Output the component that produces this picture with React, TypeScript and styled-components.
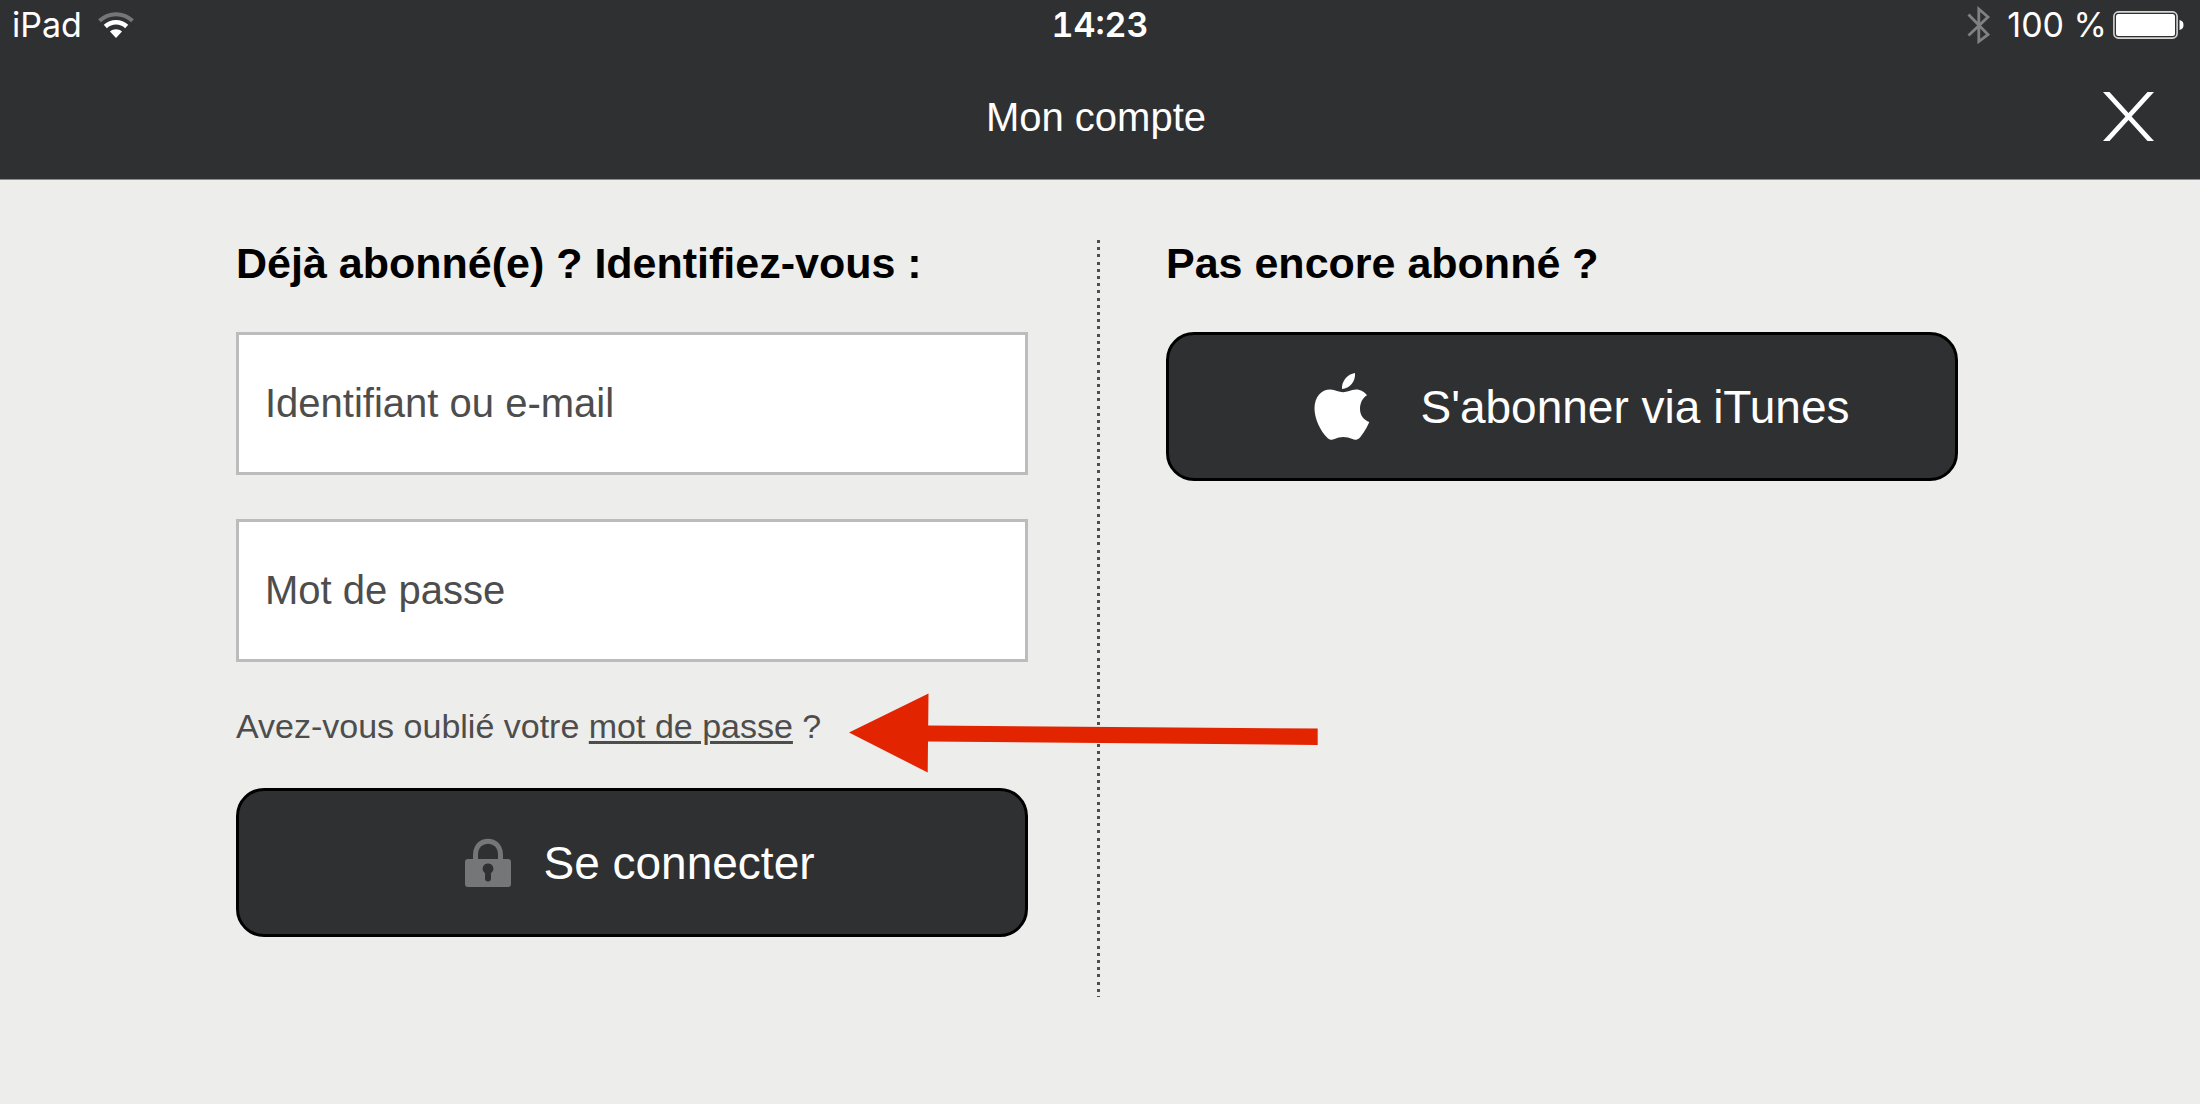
import React from "react";
import styled, { createGlobalStyle } from "styled-components";

const ink = "#2f3032";
const paper = "#ededeb";
const grey = "#4d4d4d";

const GlobalStyle = createGlobalStyle`
  *, *::before, *::after { box-sizing: border-box; }
  body {
    margin: 0;
    background: ${paper};
    font-family: "Liberation Sans", Arial, Helvetica, sans-serif;
  }
`;

const Page = styled.div`
  min-height: 100vh;
  background: ${paper};
`;

const Header = styled.header`
  background: ${ink};
  color: #fff;
  border-bottom: 1px solid #8c8c8c;
`;

const StatusBar = styled.div`
  display: grid;
  grid-template-columns: 1fr auto 1fr;
  align-items: center;
  height: 50px;
  padding: 0 12px;
  font-family: Inter, "Liberation Sans", sans-serif;
  font-size: 34px;
  line-height: 40px;
`;

const StatusGroup = styled.div<{ $gap: number; $end?: boolean }>`
  display: flex;
  align-items: center;
  justify-content: ${(p) => (p.$end ? "flex-end" : "flex-start")};
  gap: ${(p) => p.$gap}px;
  padding-right: ${(p) => (p.$end ? 4 : 0)}px;
`;

const Clock = styled.time`
  font-weight: 600;
  font-variant-numeric: tabular-nums;
`;

const Bluetooth = styled.svg`
  display: block;
  margin-right: 10px;
`;

const TitleBar = styled.div`
  display: grid;
  grid-template-columns: 1fr auto 1fr;
  align-items: center;
  height: 129px;
  padding: 4px 46px 0 38px;
`;

const Title = styled.h1`
  grid-column: 2;
  margin: 0;
  font-size: 40px;
  font-weight: 400;
  line-height: 48px;
`;

const CloseButton = styled.button`
  justify-self: end;
  padding: 0;
  border: 0;
  background: none;
  color: inherit;
  cursor: pointer;

  svg { display: block; }
`;

const Main = styled.main`
  display: grid;
  grid-template-columns: minmax(0, 1fr) auto minmax(0, 1fr);
  padding: 60px 242px 104px 236px;
`;

const DottedRule = styled.div`
  width: 3px;
  margin: 0 66px 0 69px;
  background: repeating-linear-gradient(
    to bottom,
    ${grey} 0 3px, transparent 3px 7px,
    ${grey} 7px 10px, transparent 10px 14px,
    ${grey} 14px 17px, transparent 17px 22px,
    ${grey} 22px 25px, transparent 25px 29px,
    ${grey} 29px 32px, transparent 32px 36px
  );
`;

const Section = styled.section`
  padding-bottom: 60px;
`;

const Heading = styled.h2`
  margin: 0 0 46px;
  font-size: 43px;
  font-weight: 700;
  line-height: 46px;
  color: #000;
`;

const Form = styled.form`
  display: flex;
  flex-direction: column;
`;

const Field = styled.input`
  width: 100%;
  height: 143px;
  margin-bottom: 44px;
  padding: 0 26px;
  border: 3px solid #bcbcbc;
  border-radius: 0;
  background: #fff;
  color: ${grey};
  font-family: inherit;
  font-size: 40px;
  outline: none;

  &::placeholder { color: ${grey}; opacity: 1; }
`;

const Forgot = styled.p`
  position: relative;
  margin: 0 0 42px;
  font-size: 34px;
  line-height: 40px;
  color: ${grey};
`;

const ForgotLink = styled.a`
  color: inherit;
  text-decoration: underline;
  text-decoration-thickness: 3px;
  text-underline-offset: 3px;
`;

const Arrow = styled.svg`
  position: absolute;
  left: 613px;
  top: -13px;
  pointer-events: none;
`;

const ActionButton = styled.button<{ $gap: number; $indent: number }>`
  display: flex;
  align-items: center;
  justify-content: center;
  gap: ${(p) => p.$gap}px;
  width: 100%;
  height: 149px;
  padding: 0 0 0 ${(p) => p.$indent}px;
  border: 3px solid #000;
  border-radius: 28px;
  background: ${ink};
  color: #fff;
  font-family: inherit;
  font-size: 46px;
  line-height: 52px;
  cursor: pointer;

  svg { display: block; flex: none; }
`;

const WifiIcon = () => (
  <svg width="36" height="27" viewBox="0 0 36 27" fill="none" aria-hidden="true">
    <path d="M1.5 8.8C11 0 25 0 34.5 8.8" stroke="#757677" strokeWidth="4" />
    <path d="M7.3 14.5C13.5 8.8 22.500 8.8 28.7 14.5" stroke="#fff" strokeWidth="4.6" />
    <path d="M12 19.5C15.500 16.500 20.500 16.500 24 19.5L18 26Z" fill="#fff" />
  </svg>
);

const BluetoothIcon = () => (
  <Bluetooth width="24" height="40" viewBox="0 0 24 40" fill="none" aria-hidden="true">
    <path d="M1.5 9.5L21 29.500L11.800 36.500V4L21 12L1.5 30.500" stroke="#808182" strokeWidth="2.800" />
  </Bluetooth>
);

const BatteryIcon = () => (
  <svg width="71" height="28" viewBox="0 0 71 28" aria-hidden="true">
    <rect x="0.9" y="0.9" width="63.2" height="26.2" rx="4.5" fill="none" stroke="#d5d5d5" strokeWidth="1.6" />
    <rect x="3" y="3" width="59" height="22" rx="2.5" fill="#fff" />
    <path d="M66.5 9C69.500 9.500 70.500 11.500 70.500 14S69.500 18.500 66.500 19Z" fill="#fff" />
  </svg>
);

const CloseIcon = () => (
  <svg width="51" height="49" viewBox="0 0 51 49" aria-hidden="true">
    <path
      d="M0 0H6.5L25.500 21L44.500 0H51L28.600 24.500L51 49H44.500L25.500 28L6.500 49H0L22.400 24.500Z"
      fill="#fff"
    />
  </svg>
);

const LockIcon = () => (
  <svg width="46" height="49" viewBox="0 0 46 49" aria-hidden="true">
    <path d="M10.5 23V17C10.500 -1.500 35.500 -1.500 35.500 17V23" fill="none" stroke="#757678" strokeWidth="5" />
    <path
      fillRule="evenodd"
      fill="#757678"
      d="M3 21H43Q46 21 46 24V46Q46 49 43 49H3Q0 49 0 46V24Q0 21 3 21ZM23 25.500A5.300 5.300 0 0 0 20 35.200V40.500Q20 43.500 23 43.500T26 40.500V35.200A5.300 5.300 0 0 0 23 25.500Z"
    />
  </svg>
);

const AppleIcon = () => (
  <svg width="56" height="67" viewBox="0 0 56 67" fill="#fff" aria-hidden="true">
    <path d="M41 0C41.800 8.500 35.500 15.500 28 16C27.200 8.500 33.500 1 41 0Z" />
    <path d="M29 19.300C33 19.300 37 16.500 42 16.500C47 16.500 50.500 19 53 22.300C48.500 25 46 30 46 36C46 42.500 50 47 55.300 49C53 54.500 49 61 45.500 65C43.500 67 40.500 67.300 38.500 66C32.500 63.200 26 63.200 20.500 66C18 67.300 15.500 67 13.500 65C6 57.500 .5 45.500 .5 35.500C.5 24 7 16.500 16.500 16.500C21 16.500 25 19.300 29 19.300Z" />
  </svg>
);

export default function App() {
  return (
    <Page>
      <GlobalStyle />
      <Header>
        <StatusBar>
          <StatusGroup $gap={16}>
            <span>iPad</span>
            <WifiIcon />
          </StatusGroup>
          <Clock>14:23</Clock>
          <StatusGroup $gap={6} $end>
            <BluetoothIcon />
            <span>100 %</span>
            <BatteryIcon />
          </StatusGroup>
        </StatusBar>
        <TitleBar>
          <Title>Mon compte</Title>
          <CloseButton type="button" aria-label="Fermer">
            <CloseIcon />
          </CloseButton>
        </TitleBar>
      </Header>
      <Main>
        <Section>
          <Heading>Déjà abonné(e) ? Identifiez-vous :</Heading>
          <Form onSubmit={(e) => e.preventDefault()}>
            <Field type="text" aria-label="Identifiant ou e-mail" placeholder="Identifiant ou e-mail" />
            <Field type="password" aria-label="Mot de passe" placeholder="Mot de passe" />
            <Forgot>
              Avez-vous oublié votre <ForgotLink href="#mot-de-passe">mot de passe</ForgotLink> ?
              <Arrow width="470" height="80" viewBox="0 0 470 80" aria-hidden="true">
                <path d="M0 39.5L79.500 0.500L79.200 32.500L468.700 35.500V52L79 48.500L78.700 79.500Z" fill="#e32400" />
              </Arrow>
            </Forgot>
            <ActionButton type="submit" $gap={32} $indent={16}>
              <LockIcon />
              Se connecter
            </ActionButton>
          </Form>
        </Section>
        <DottedRule />
        <Section>
          <Heading>Pas encore abonné ?</Heading>
          <ActionButton type="button" $gap={50} $indent={40}>
            <AppleIcon />
            S'abonner via iTunes
          </ActionButton>
        </Section>
      </Main>
    </Page>
  );
}
